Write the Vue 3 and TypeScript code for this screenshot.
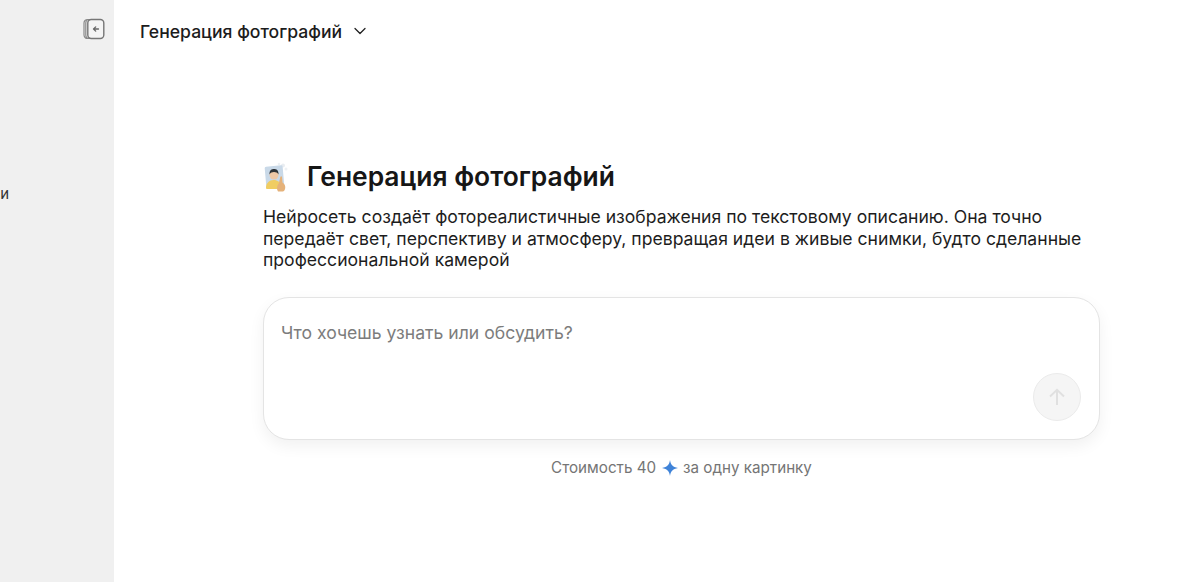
<script setup lang="ts">
const title = 'Генерация фотографий'
const description = 'Нейросеть создаёт фотореалистичные изображения по текстовому описанию. Она точно передаёт свет, перспективу и атмосферу, превращая идеи в живые снимки, будто сделанные профессиональной камерой'
</script>

<template>
  <div class="page">
    <aside class="sidebar">
      <div class="side-top">
        <svg class="collapse" width="22" height="22" viewBox="0 0 22 22" fill="none">
          <path d="M6 1.500H4.500a3.500 3.500 0 0 0-3.500 3.500v12a3.500 3.500 0 0 0 3.500 3.500H6" stroke="#8a8a8a" stroke-width="1.200"/>
          <path d="M7 1.500H6a3.500 3.500 0 0 0-3.200 3.500v12a3.500 3.500 0 0 0 3.200 3.500h1" stroke="#8a8a8a" stroke-width="1.200"/>
          <rect x="4.800" y="1.500" width="16" height="19" rx="3.500" stroke="#767676" stroke-width="1.400" fill="#f4f4f4"/>
          <path d="M15.500 11H10.500M12.700 8.900 10.500 11l2.200 2.100" stroke="#666" stroke-width="1.300" stroke-linecap="round" stroke-linejoin="round"/>
        </svg>
      </div>
      <div class="side-label">Задачи</div>
    </aside>
    <main class="main">
      <header class="topbar">
        <span class="model">{{ title }}</span>
        <svg width="14" height="14" viewBox="0 0 14 14" fill="none">
          <path d="M2 4.500 7 9.500 12 4.500" stroke="#222" stroke-width="1.300" stroke-linecap="round" stroke-linejoin="round"/>
        </svg>
      </header>
      <section class="content">
        <div class="heading">
          <svg class="emoji" width="26" height="30" viewBox="0 0 26 30">
            <circle cx="20" cy="3.500" r="2" fill="#e9edf1"/>
            <circle cx="23" cy="7" r="1.500" fill="#eef1f4"/>
            <circle cx="16" cy="2" r="1.300" fill="#eef1f4"/>
            <rect x="2.500" y="4" width="18" height="22" rx="1.500" fill="#c9d9e8" transform="rotate(-5 11 15)"/>
            <path d="M3 26.500c-.3-5.500 3.500-8.500 7.500-8.500s7.500 2.500 8 7l-1 2H4z" fill="#f0cd62"/>
            <circle cx="11" cy="13" r="4.500" fill="#efc8a6"/>
            <path d="M6.500 12.500C6.200 8 8.800 7 11 7s4.800 1 4.500 5.500c-1-2-2.600-2.600-4.500-2.600s-3.500.6-4.500 2.600z" fill="#2f3338"/>
            <path d="M15 29.500c-1.500-2-1.200-6 .8-8l1.500-6.500c.4-1 1.500-1 1.700 0l.5 5.500c2.200 1.200 3.300 3.800 2.600 6.200-.4 1.600-1.200 2.800-2.300 2.800z" fill="#e5b27a"/>
          </svg>
          <h1 class="title">{{ title }}</h1>
        </div>
        <p class="description">{{ description }}</p>
        <div class="composer">
          <span class="placeholder">Что хочешь узнать или обсудить?</span>
          <button class="send" type="button" aria-label="Отправить">
            <svg width="22" height="22" viewBox="0 0 22 22" fill="none">
              <path d="M11 19V4M4 10.500 11 3.800l7 6.700" stroke="#e0e0e0" stroke-width="2"/>
            </svg>
          </button>
        </div>
        <div class="cost">
          <span>Стоимость 40</span>
          <svg width="16" height="16" viewBox="0 0 16 16">
            <path d="M8 0C8.600 4.500 10.500 7 16 8c-5.500 1-7.400 3.500-8 8-.6-4.500-2.500-7-8-8 5.500-1 7.400-3.500 8-8z" fill="#3f83d8"/>
          </svg>
          <span>за одну картинку</span>
        </div>
      </section>
    </main>
  </div>
</template>

<style>
html, body { margin: 0; background: #fff; }
</style>

<style scoped>
.page {
  display: flex;
  height: 582px;
  overflow: hidden;
  font-family: Inter, "Liberation Sans", sans-serif;
  color: #1a1a1a;
}
.sidebar {
  width: 114px;
  flex: none;
  background: #f0f0f0;
  overflow: hidden;
}
.side-top {
  display: flex;
  justify-content: flex-end;
  padding: 18px 9px 0 0;
}
.side-label {
  margin: 144px 0 0 -44px;
  font-size: 15px;
  line-height: 20px;
  color: #333;
  white-space: nowrap;
}
.main {
  flex: 1;
  min-width: 0;
}
.topbar {
  display: flex;
  align-items: center;
  gap: 11px;
  height: 62px;
  padding-left: 26px;
}
.model {
  font-size: 17.600px;
  font-weight: 500;
  color: #1c1c1c;
}
.content {
  width: 837px;
  margin: 97px 0 0 149px;
}
.heading {
  display: flex;
  align-items: center;
  gap: 18px;
  height: 34px;
}
.emoji {
  margin-top: 2px;
}
.title {
  margin: 0;
  font-size: 26.400px;
  font-weight: 600;
  line-height: 34px;
  color: #161616;
}
.description {
  margin: 13px 0 0;
  font-size: 17.600px;
  line-height: 21.500px;
  color: #1d1d1d;
}
.composer {
  position: relative;
  box-sizing: border-box;
  height: 143px;
  margin-top: 26px;
  padding: 24px 17px;
  border: 1px solid #e4e4e4;
  border-radius: 26px;
  background: #fff;
  box-shadow: 0 6px 16px rgba(0, 0, 0, 0.06);
}
.placeholder {
  font-size: 17.600px;
  line-height: 22px;
  color: #7c7c7c;
}
.send {
  position: absolute;
  right: 18px;
  bottom: 18px;
  display: flex;
  align-items: center;
  justify-content: center;
  box-sizing: border-box;
  width: 48px;
  height: 48px;
  padding: 0;
  border: 1px solid #ebebeb;
  border-radius: 50%;
  background: #f5f5f5;
}
.cost {
  display: flex;
  align-items: center;
  justify-content: center;
  gap: 5.500px;
  margin-top: 18px;
  font-size: 15.200px;
  line-height: 20px;
  color: #757575;
}
</style>
